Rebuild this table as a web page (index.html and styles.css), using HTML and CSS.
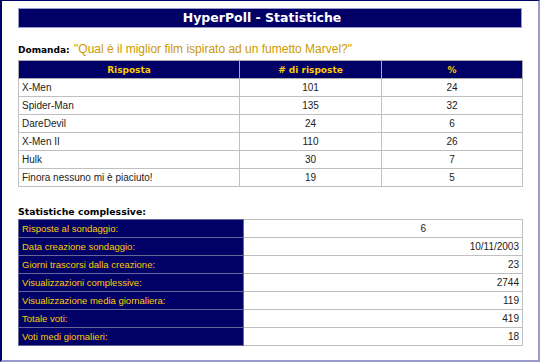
FILE: index.html
```html
<!DOCTYPE html>
<html lang="it">
<head>
<meta charset="utf-8">
<title>HyperPoll - Statistiche</title>
<link rel="stylesheet" href="styles.css">
</head>
<body>
<div class="page">
  <div class="title">HyperPoll - Statistiche</div>
  <div class="question"><span class="label">Domanda:</span> <span class="qtext">"Qual è il miglior film ispirato ad un fumetto Marvel?"</span></div>
  <table class="poll">
    <colgroup><col class="c1"><col class="c2"><col class="c3"></colgroup>
    <thead>
      <tr><th>Risposta</th><th># di risposte</th><th>%</th></tr>
    </thead>
    <tbody>
      <tr><td>X-Men</td><td class="num">101</td><td class="num">24</td></tr>
      <tr><td>Spider-Man</td><td class="num">135</td><td class="num">32</td></tr>
      <tr><td>DareDevil</td><td class="num">24</td><td class="num">6</td></tr>
      <tr><td>X-Men II</td><td class="num">110</td><td class="num">26</td></tr>
      <tr><td>Hulk</td><td class="num">30</td><td class="num">7</td></tr>
      <tr><td>Finora nessuno mi è piaciuto!</td><td class="num">19</td><td class="num">5</td></tr>
    </tbody>
  </table>
  <div class="subhead">Statistiche complessive:</div>
  <table class="stats">
    <colgroup><col class="s1"><col class="s2"></colgroup>
    <tbody>
      <tr><th>Risposte al sondaggio:</th><td class="first">6</td></tr>
      <tr><th>Data creazione sondaggio:</th><td>10/11/2003</td></tr>
      <tr><th>Giorni trascorsi dalla creazione:</th><td>23</td></tr>
      <tr><th>Visualizzazioni complessive:</th><td>2744</td></tr>
      <tr><th>Visualizzazione media giornaliera:</th><td>119</td></tr>
      <tr><th>Totale voti:</th><td>419</td></tr>
      <tr><th>Voti medi giornalieri:</th><td>18</td></tr>
    </tbody>
  </table>
</div>
</body>
</html>
```

FILE: styles.css
```css
html, body {
  margin: 0;
  padding: 0;
  background: #ffffff;
}

.page {
  box-sizing: border-box;
  width: 540px;
  height: 362px;
  border-style: solid;
  border-width: 1px 2px 2px 2px;
  border-color: #000066 #9999cc #9999cc #000066;
  padding: 7px 16px 0 16px;
  font-family: "Liberation Sans", Arial, sans-serif;
}

.title {
  box-sizing: border-box;
  width: 504px;
  height: 20px;
  padding-right: 16px;
  background: #000066;
  border: 1px solid #9999cc;
  color: #ffffff;
  font-family: "DejaVu Sans", Verdana, sans-serif;
  font-weight: bold;
  font-size: 12.5px;
  line-height: 18px;
  text-align: center;
}

.question {
  margin-top: 12px;
  height: 20px;
  line-height: 16px;
}

.label {
  font-family: "DejaVu Sans", Verdana, sans-serif;
  font-weight: bold;
  font-size: 9px;
  color: #000000;
}

.qtext {
  font-size: 12px;
  color: #cc9900;
}

table {
  width: 504px;
  border-collapse: collapse;
  table-layout: fixed;
  font-size: 10px;
}

.poll {
  border: 1px solid #aaaaaa;
}

.c1 { width: 221px; }
.c2 { width: 142px; }
.c3 { width: 141px; }

.poll th {
  height: 17px;
  padding: 0;
  background: #000066;
  color: #ffcc00;
  font-family: "DejaVu Sans", Verdana, sans-serif;
  font-size: 9px;
  font-weight: bold;
  border: 1px solid #aaaaaa;
}

.poll td {
  height: 17px;
  padding: 0 0 0 3px;
  border: 1px solid #c0c0c0;
  color: #222222;
}

.poll td.num {
  text-align: center;
  padding: 0;
}

.subhead {
  margin-top: 17px;
  height: 15px;
  line-height: 15px;
  font-family: "DejaVu Sans", Verdana, sans-serif;
  font-weight: bold;
  font-size: 9.3px;
  color: #000000;
}

.stats {
  border: 1px solid #c0c0c0;
}

.s1 { width: 225px; }
.s2 { width: 279px; }

.stats th {
  height: 17px;
  padding: 0 0 0 3px;
  background: #000066;
  color: #ffcc00;
  font-size: 9.5px;
  font-weight: normal;
  text-align: left;
  border: 1px solid #666699;
}

.stats td {
  height: 17px;
  padding: 0 3px 0 0;
  text-align: right;
  border: 1px solid #c0c0c0;
  color: #222222;
}

.stats td.first {
  padding-right: 96px;
}
```
